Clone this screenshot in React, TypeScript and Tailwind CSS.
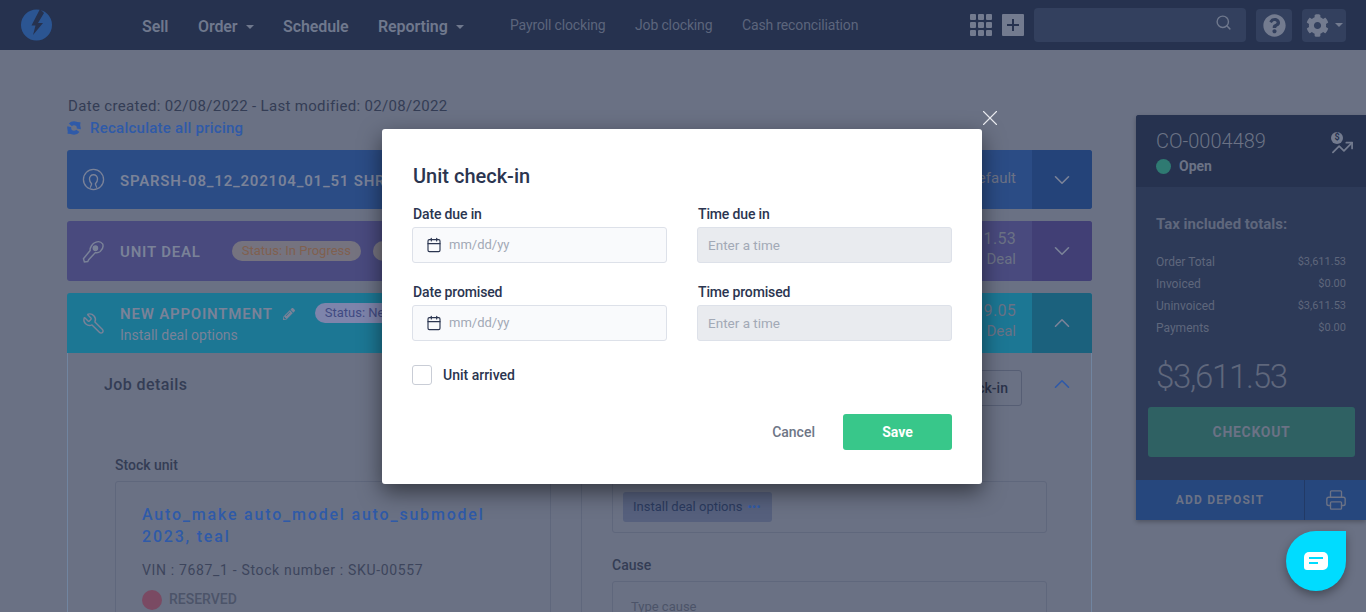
import { Calendar, ChevronDown, ChevronUp, Printer, Search, TrendingUp, Wrench, X } from 'lucide-react';
import { FaCog, FaPencilAlt, FaQuestionCircle } from 'react-icons/fa';

const totals = [
  ['Order Total', '$3,611.53'],
  ['Invoiced', '$0.00'],
  ['Uninvoiced', '$3,611.53'],
  ['Payments', '$0.00'],
];

function Caret() {
  return <span className="ml-2 inline-block border-x-[4px] border-t-[4px] border-x-transparent border-t-[#6f788d] align-middle" />;
}

function TopBar() {
  return (
    <header className="flex h-[50px] shrink-0 items-center bg-[#26324f] pl-[21px] pr-[20px]">
      <svg viewBox="0 0 32 32" className="h-[32px] w-[32px] shrink-0">
        <circle cx="15.5" cy="16" r="15.5" fill="#2b5592" />
        <path d="M19 0 L23 4 L17 14 L22 14 L12 26 L14.5 16.5 L10.5 16.5 Z" fill="#26324f" />
      </svg>
      <nav className="ml-[89px] flex items-center pt-[3px] text-[16px] font-semibold tracking-[-0.1px] text-[#6f788d]">
        <span className="w-[56px]">Sell</span>
        <span className="w-[85px]">Order<Caret /></span>
        <span className="w-[95px]">Schedule</span>
        <span className="w-[132px]">Reporting<Caret /></span>
      </nav>
      <div className="flex items-center text-[14px] tracking-[-0.15px] text-[#5c657c]">
        <span className="w-[125px]">Payroll clocking</span>
        <span className="w-[107px]">Job clocking</span>
        <span>Cash reconciliation</span>
      </div>
      <div className="ml-auto grid grid-cols-3 gap-[2px]">
        {Array.from({ length: 9 }).map((_, i) => (
          <span key={i} className="h-[6px] w-[6px] rounded-[1px] bg-[#737b8f]" />
        ))}
      </div>
      <div className="ml-[10px] flex h-[22px] w-[22px] items-center justify-center rounded-[1px] bg-[#737b8f]">
        <svg viewBox="0 0 14 14" className="h-[14px] w-[14px]">
          <path d="M7 1v12M1 7h12" stroke="#26324f" strokeWidth="2" />
        </svg>
      </div>
      <div className="ml-[10px] flex h-[34px] w-[212px] items-center justify-end rounded-[4px] bg-[#33405e] pr-[14px]">
        <Search size={17} strokeWidth={2} className="mt-[-6px] text-[#6f788d]" />
      </div>
      <div className="ml-[10px] flex h-[33px] w-[36px] items-center justify-center rounded-[4px] bg-[#33405e]">
        <FaQuestionCircle size={23} className="text-[#737b8f]" />
      </div>
      <div className="ml-[10px] flex h-[33px] w-[44px] items-center rounded-[4px] bg-[#33405e] pl-[4px]">
        <FaCog size={23} className="text-[#737b8f]" />
        <span className="ml-[6px] inline-block border-x-[4px] border-t-[4px] border-x-transparent border-t-[#737b8f]" />
      </div>
    </header>
  );
}

function UserIcon() {
  return (
    <svg viewBox="0 0 24 24" fill="none" stroke="#7a8298" strokeWidth="1.4" className="h-[23px] w-[23px]">
      <circle cx="12" cy="12" r="10.5" />
      <path d="M8.5 20.5c.8-2 1.500-2.500 1.500-4-1-1-2.200-2.500-2.200-5A4.200 4.200 0 0 1 12 7a4.200 4.200 0 0 1 4.200 4.500c0 2.500-1.200 4-2.200 5 0 1.500.7 2 1.500 4" />
    </svg>
  );
}

function KeyIcon() {
  return (
    <svg viewBox="0 0 24 24" fill="none" stroke="#7a8298" strokeWidth="1.500" className="h-[23px] w-[23px]">
      <path d="M14 2.500c2.800-1.300 6-.5 7.500 1.500 1 2.500-.3 6-2.500 8-2 1.500-3.500 1.500-5 1L7 20.500l-1 2-3.500.5-1-3.500L8.500 11c-.5-3 2.500-7.500 5.500-8.500z" />
      <circle cx="14" cy="8.500" r="2.200" fill="#7a8298" />
    </svg>
  );
}

function RecalcIcon() {
  return (
    <svg viewBox="0 0 14 14" className="h-[14px] w-[14px] shrink-0">
      <circle cx="7" cy="7" r="4.800" fill="none" stroke="#2f5aa8" strokeWidth="4" strokeDasharray="13 2" strokeDashoffset="-3" />
      <path d="M9 1l4.500 .2-.5 4.300zM5 13l-4.500-.2.5-4.300z" fill="#2f5aa8" />
    </svg>
  );
}

function Pill({ label, className }: { label: string; className: string }) {
  return (
    <span className={`flex h-[20px] shrink-0 items-center whitespace-nowrap rounded-full px-[10px] text-[13px] ${className}`}>
      {label}
    </span>
  );
}

function Section({
  bg,
  dark,
  icon,
  rounded,
  height,
  open,
  children,
  right,
}: {
  bg: string;
  dark: string;
  icon: React.ReactNode;
  rounded: string;
  height: string;
  open?: boolean;
  children: React.ReactNode;
  right: React.ReactNode;
}) {
  return (
    <div className={`flex items-stretch overflow-hidden ${height} ${bg} ${rounded}`}>
      <div className="flex w-[53px] shrink-0 items-center justify-end pr-[15px]">{icon}</div>
      <div className="flex min-w-0 flex-1 items-center">
        <div className="flex min-w-0 flex-1 items-center overflow-hidden">{children}</div>
        <div className="shrink-0 pb-[4px] pr-[16px] text-right text-[15px] leading-[20px] text-[#6b7285]">{right}</div>
      </div>
      <div className={`flex w-[60px] shrink-0 items-center justify-center ${dark}`}>
        {open ? (
          <ChevronUp size={26} strokeWidth={1.500} className="text-[#7a8298]" />
        ) : (
          <ChevronDown size={26} strokeWidth={1.500} className="text-[#7a8298]" />
        )}
      </div>
    </div>
  );
}

function JobDetails() {
  return (
    <div className="border-x border-[#7185a0] bg-[#6a7184] px-[36px] pt-[17px]">
      <div className="flex h-[36px] items-center">
        <h3 className="mt-[-6px] text-[16px] font-medium tracking-[0.4px] text-[#343d55]">Job details</h3>
        <button className="ml-auto h-[36px] w-[110px] rounded-[3px] border border-[#565e74] text-[14px] font-medium text-[#2a334b]">
          Unit check-in
        </button>
        <ChevronUp size={26} strokeWidth={1.500} className="ml-[27px] mr-[-20px] mt-[-8px] text-[#2f5aa8]" />
      </div>
      <div className="mt-[51px] flex gap-[30px] pl-[11px]">
        <div className="w-[436px] shrink-0">
          <div className="text-[14px] font-medium leading-[16px] text-[#343d55]">Stock unit</div>
          <div className="mt-[8px] h-[140px] rounded-t-[3px] border border-[#5f677c] px-[26px] pt-[22px]">
            <div className="text-[16px] font-medium leading-[22px] tracking-[1.800px] text-[#2f5aa8]">
              Auto_make auto_model auto_submodel 2023, teal
            </div>
            <div className="mt-[13px] whitespace-nowrap text-[14px] leading-[18px] tracking-[0.660px] text-[#3d455c]">
              VIN : 7687_1 - Stock number : SKU-00557
            </div>
            <div className="mt-[10px] flex items-center gap-[7px]">
              <span className="h-[20px] w-[20px] rounded-full bg-[#7a4a63]" />
              <span className="text-[14px] font-medium text-[#4c5469]">RESERVED</span>
            </div>
          </div>
        </div>
        <div className="h-[200px] flex-1 border-l border-[#5f677c] pl-[30px] pr-[8px]">
          <div className="mt-[24px] flex h-[52px] items-center rounded-[3px] border border-[#5f677c] px-[10px]">
            <div className="flex h-[30px] w-[149px] items-center rounded-[3px] bg-[#56607d] pl-[10px] text-[13px] text-[#2a3a5e]">
              Install deal options
              <span className="ml-[5px] text-[#2f5aa8]">•••</span>
            </div>
          </div>
          <div className="mt-[24px] text-[14px] font-medium leading-[16px] text-[#343d55]">Cause</div>
          <div className="mt-[8px] h-[60px] rounded-t-[3px] border border-[#5f677c] px-[18px] pt-[15px] text-[13px] text-[#4c5469]">
            Type cause
          </div>
        </div>
      </div>
    </div>
  );
}

function OrderPanel() {
  return (
    <aside className="mt-[65px] h-[405px] w-[230px] shrink-0 overflow-hidden rounded-tl-[3px] bg-[#2d3a58] shadow-[0_2px_4px_rgba(0,0,0,0.25)]">
      <div className="relative h-[72px] bg-[#26324f] pl-[20px] pt-[14px]">
        <div className="text-[20px] font-light leading-[24px] text-[#6b7285]">CO-0004489</div>
        <div className="mt-[3px] flex items-center gap-[8px]">
          <span className="h-[15px] w-[15px] rounded-full bg-[#2f7a72]" />
          <span className="text-[14px] font-bold text-[#6b7285]">Open</span>
        </div>
        <div className="absolute right-[11px] top-[17px] h-[24px] w-[24px] text-[#737b8f]">
          <span className="absolute left-0 top-0 flex h-[12px] w-[12px] items-center justify-center rounded-full bg-[#737b8f] text-[9px] font-bold text-[#26324f]">$</span>
          <TrendingUp size={23} strokeWidth={1.800} className="absolute left-0 top-[4px]" />
        </div>
      </div>
      <div className="px-[20px] pt-[28px]">
        <div className="text-[15px] font-bold leading-[18px] text-[#5f677c]">Tax included totals:</div>
        <div className="mt-[21px] flex flex-col gap-[6px]">
          {totals.map(([k, v]) => (
            <div key={k} className="flex h-[16px] items-center justify-between text-[12px] text-[#5f677c]">
              <span>{k}</span>
              <span className="text-[11px]">{v}</span>
            </div>
          ))}
        </div>
        <div className="mt-[19px] text-[33px] font-light leading-[44px] tracking-[-1.300px] text-[#5f677c]">$3,611.53</div>
      </div>
      <div className="mx-[12px] mt-[8px] flex h-[50px] w-[207px] items-center justify-center rounded-[3px] bg-[#2f6163] text-[14px] font-bold tracking-[0.700px] text-[#6b7285]">
        CHECKOUT
      </div>
      <div className="mt-[23px] flex h-[40px] bg-[#26477d]">
        <div className="flex flex-1 items-center justify-center text-[12px] font-bold tracking-[1.200px] text-[#6b7285]">ADD DEPOSIT</div>
        <div className="flex w-[62px] items-center justify-center border-l border-[#223a66]">
          <Printer size={22} strokeWidth={1.500} className="text-[#6b7285]" />
        </div>
      </div>
    </aside>
  );
}

function DateField({ label }: { label: string }) {
  return (
    <label className="flex flex-col gap-[5px]">
      <span className="pl-[1px] text-[14px] font-medium leading-[16px] tracking-[-0.15px] text-[#2b3550]">{label}</span>
      <div className="flex h-[36px] items-center gap-[7px] rounded-[3px] border border-[#dde1e9] bg-[#f9fafc] pl-[13px]">
        <Calendar size={16} strokeWidth={1.700} className="text-[#2b3550]" />
        <span className="text-[13px] text-[#a2a9b6]">mm/dd/yy</span>
      </div>
    </label>
  );
}

function TimeField({ label }: { label: string }) {
  return (
    <label className="flex flex-col gap-[5px]">
      <span className="pl-[1px] text-[14px] font-medium leading-[16px] tracking-[-0.15px] text-[#2b3550]">{label}</span>
      <div className="flex h-[36px] items-center rounded-[3px] border border-[#dde1e9] bg-[#e9ebef] pl-[10px] pt-[1px] text-[13.500px] text-[#a2a9b6]">
        Enter a time
      </div>
    </label>
  );
}

function CheckInModal() {
  return (
    <div className="absolute left-[382px] top-[129px] h-[355px] w-[600px] rounded-[3px] bg-white px-[30px] pt-[35px] shadow-[0_8px_22px_rgba(0,0,0,0.5)]">
      <button className="absolute right-[-21px] top-[-24px] text-[#e8eaee]">
        <X size={26} strokeWidth={1} />
      </button>
      <h2 className="pl-[1px] text-[20px] font-medium leading-[24px] text-[#2b3550]">Unit check-in</h2>
      <div className="mt-[18px] grid grid-cols-[255px_255px] gap-x-[30px] gap-y-[21px]">
        <DateField label="Date due in" />
        <TimeField label="Time due in" />
        <DateField label="Date promised" />
        <TimeField label="Time promised" />
      </div>
      <div className="mt-[23px] flex items-center gap-[11px]">
        <span className="h-[20px] w-[20px] rounded-[3px] border border-[#c9cdd6] bg-white" />
        <span className="pt-[1px] text-[14px] font-medium text-[#2b3550]">Unit arrived</span>
      </div>
      <div className="mt-[28px] flex items-center justify-end gap-[28px]">
        <button className="text-[14px] font-medium text-[#6e7686]">Cancel</button>
        <button className="h-[36px] w-[109px] rounded-[3px] bg-[#38c78a] text-[14px] font-bold text-white">Save</button>
      </div>
    </div>
  );
}

export default function App() {
  return (
    <div className="relative flex h-[612px] w-full flex-col overflow-hidden bg-[#6a7184] font-['Roboto',sans-serif]">
      <TopBar />
      <main className="flex flex-1 overflow-hidden pl-[67px]">
        <div className="w-[1025px] shrink-0 pt-[47px]">
          <div className="pl-[1px] text-[15px] leading-[18px] tracking-[0.330px] text-[#343d55]">
            Date created: 02/08/2022 - Last modified: 02/08/2022
          </div>
          <div className="mt-[4px] flex h-[18px] items-center gap-[9px] text-[15px] font-medium tracking-[0.25px] text-[#2f5aa8]">
            <RecalcIcon />
            Recalculate all pricing
          </div>
          <div className="mt-[13px] flex flex-col gap-[12px]">
            <Section
              bg="bg-[#2b4c85]"
              dark="bg-[#244379]"
              rounded="rounded-[3px]"
              height="h-[59px]"
              icon={<UserIcon />}
              right={<span>Default</span>}
            >
              <span className="whitespace-nowrap pt-[3px] text-[15px] font-semibold tracking-[0.800px] text-[#7a8298]">
                SPARSH-08_12_202104_01_51 SHREE
              </span>
            </Section>
            <Section
              bg="bg-[#494a7e]"
              dark="bg-[#413f75]"
              rounded="rounded-[3px]"
              height="h-[60px]"
              icon={<KeyIcon />}
              right={
                <>
                  <div className="text-[16px] tracking-[0.300px]">$3,611.53</div>
                  <div>Deal</div>
                </>
              }
            >
              <span className="whitespace-nowrap pt-[3px] text-[15px] font-semibold tracking-[0.800px] text-[#7a8298]">UNIT DEAL</span>
              <Pill label="Status: In Progress" className="ml-[31px] bg-[#75737f] text-[#80604f]" />
              <Pill label="Open" className="ml-[12px] bg-[#75737f] text-[#80604f]" />
            </Section>
            <div>
              <Section
                bg="bg-[#1c7794]"
                dark="bg-[#1b617d]"
                rounded="rounded-t-[3px]"
                height="h-[60px]"
                open
                icon={<Wrench size={23} strokeWidth={1.500} className="-scale-x-100 text-[#7a8298]" />}
                right={
                  <>
                    <div className="text-[16px] tracking-[0.300px]">$3,619.05</div>
                    <div>Deal</div>
                  </>
                }
              >
                <div className="pt-[4px]">
                  <div className="flex items-center gap-[10px] text-[15px] font-semibold leading-[20px] tracking-[0.800px] text-[#7a8298]">
                    NEW APPOINTMENT
                    <FaPencilAlt size={12} />
                  </div>
                  <div className="text-[14px] leading-[22px] text-[#7a8298]">Install deal options</div>
                </div>
                <Pill label="Status: New" className="mb-[20px] ml-[20px] bg-[#7e84ab] text-[#414a82]" />
              </Section>
              <JobDetails />
            </div>
          </div>
        </div>
        <div className="w-[44px] shrink-0" />
        <OrderPanel />
      </main>
      <CheckInModal />
      <button className="absolute left-[1286px] top-[531px] flex h-[60px] w-[60px] items-center justify-center rounded-full rounded-tr-[6px] bg-[#00dcff] shadow-[0_4px_10px_rgba(0,0,0,0.35)]">
        <svg viewBox="0 0 24 18" className="h-[18px] w-[24px]">
          <path d="M5 0h14a5 5 0 0 1 5 5v8a5 5 0 0 1-5 5H3a3 3 0 0 1-3-3V5a5 5 0 0 1 5-5z" fill="#fff" />
          <path d="M5 6h14M5 11h9" stroke="#00dcff" strokeWidth="2" />
        </svg>
      </button>
    </div>
  );
}
